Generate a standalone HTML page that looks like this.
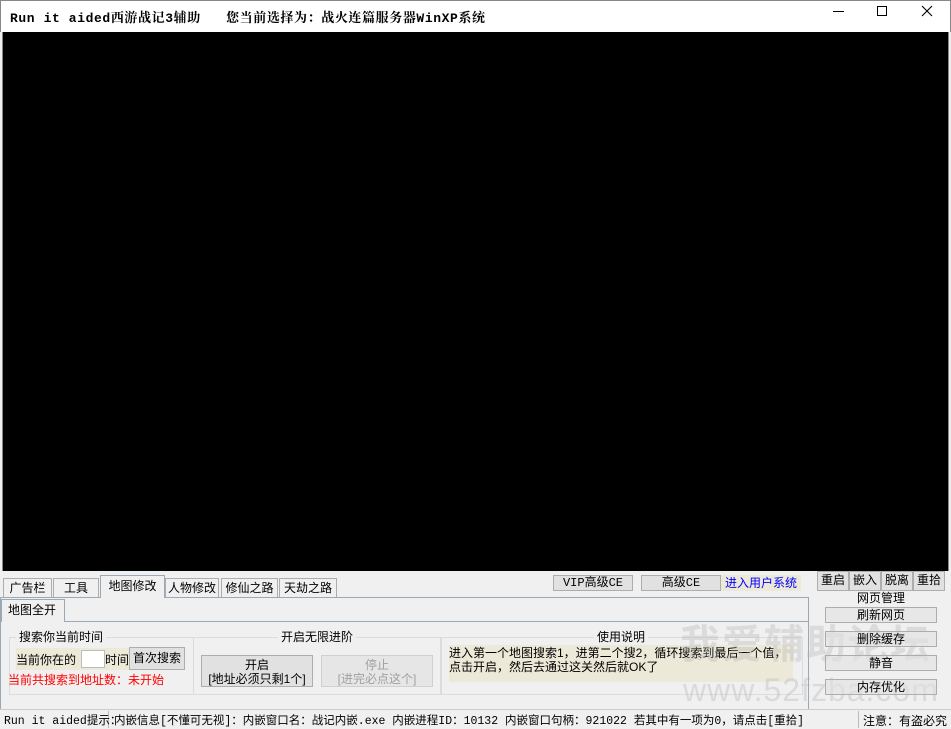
<!DOCTYPE html>
<html><head><meta charset="utf-8"><style>
*{margin:0;padding:0;box-sizing:border-box}
body{width:951px;height:729px;background:#f0f0f0;position:relative;overflow:hidden;font-family:"Liberation Sans","Noto Sans CJK SC",sans-serif;font-size:12px;color:#000}
.a{position:absolute;white-space:nowrap}
.btn{position:absolute;border:1px solid #adadad;background:#e1e1e1;text-align:center;line-height:14px}
.tab{position:absolute;border:1px solid #adadad;border-bottom:none;background:#f0f0f0;text-align:center;line-height:18px;top:578px;height:19px}
.grp{position:absolute;border:1px solid #dcdcdc;}
.gt{position:absolute;background:#f0f0f0;padding:0 3px;top:-9px;line-height:16px}
</style></head><body>
<div class="a" style="left:0;top:0;width:951px;height:32px;background:#fff;border:1px solid #888;border-bottom:none"></div>
<div class="a" style="left:10px;top:7px;font-family:'Liberation Mono','Noto Serif CJK SC',monospace;font-weight:bold;font-size:13px;letter-spacing:0.6px">Run it aided西游战记3辅助 &nbsp;&nbsp;您当前选择为：战火连篇服务器WinXP系统</div>
<div class="a" style="left:833px;top:11px;width:11px;height:1px;background:#000"></div>
<div class="a" style="left:877px;top:6px;width:10px;height:10px;border:1px solid #000"></div>
<svg class="a" style="left:921px;top:5px" width="12" height="12"><path d="M1 1L11 11M11 1L1 11" stroke="#000" stroke-width="1.1"/></svg>
<div class="a" style="left:2px;top:32px;width:947px;height:539px;background:#000;border-left:1px solid #888;border-right:1px solid #888"></div>

<div class="tab" style="left:3px;width:49px">广告栏</div>
<div class="tab" style="left:53px;width:46px">工具</div>
<div class="tab" style="left:165px;width:54px">人物修改</div>
<div class="tab" style="left:221px;width:57px">修仙之路</div>
<div class="tab" style="left:279px;width:58px">天劫之路</div>
<div class="a" style="left:0;top:597px;width:809px;height:112px;border:1px solid #9aa9b5;border-bottom:none;background:#f0f0f0"></div>
<div class="tab" style="left:100px;top:575px;width:65px;height:23px;line-height:20px;border-color:#9aa9b5;z-index:2">地图修改</div>
<div class="a" style="left:64px;top:621px;width:744px;height:1px;background:#9aa9b5"></div>
<div class="a" style="left:1px;top:599px;width:64px;height:23px;border:1px solid #9aa9b5;border-bottom:none;line-height:20px;padding-left:6px">地图全开</div>

<div class="grp" style="left:9px;top:637px;width:185px;height:58px"><span class="gt" style="left:6px">搜索你当前时间</span></div>
<div class="a" style="left:16px;top:648px;width:113px;height:22px;background:#ece9d8"></div>
<div class="a" style="left:16px;top:651px">当前你在的</div>
<div class="a" style="left:81px;top:650px;width:24px;height:18px;background:#fff;border:1px solid #bbb"></div>
<div class="a" style="left:105px;top:651px">时间</div>
<div class="btn" style="left:129px;top:647px;width:56px;height:23px;line-height:21px">首次搜索</div>
<div class="a" style="left:8px;top:671px;color:#f00">当前共搜索到地址数：未开始</div>

<div class="grp" style="left:193px;top:637px;width:248px;height:58px"><span class="gt" style="left:84px">开启无限进阶</span></div>
<div class="btn" style="left:201px;top:655px;width:112px;height:32px;padding-top:2px">开启<br>[地址必须只剩1个]</div>
<div class="btn" style="left:321px;top:655px;width:112px;height:32px;padding-top:2px;color:#a0a0a0;background:#e6e6e6;border-color:#d0d0d0">停止<br>[进完必点这个]</div>

<div class="grp" style="left:441px;top:637px;width:362px;height:58px"><span class="gt" style="left:152px">使用说明</span></div>
<div class="a" style="left:449px;top:645px;width:344px;height:37px;background:#ece9d8"></div>
<div class="a" style="left:449px;top:646px;line-height:14px">进入第一个地图搜索1，进第二个搜2，循环搜索到最后一个值，<br>点击开启，然后去通过这关然后就OK了</div>

<div class="a" style="left:680px;top:612px;font-size:40px;font-weight:bold;color:rgba(180,180,180,0.35);letter-spacing:2px;font-family:'Noto Sans CJK SC',sans-serif">我爱辅助论坛</div>
<div class="a" style="left:683px;top:672px;font-size:32px;color:rgba(170,170,170,0.3);letter-spacing:1px">www.52fzba.com</div>

<div class="btn" style="left:553px;top:575px;width:80px;height:16px;font-family:'Liberation Mono','Noto Sans CJK SC',monospace">VIP高级CE</div>
<div class="btn" style="left:641px;top:575px;width:80px;height:16px;font-family:'Liberation Mono','Noto Sans CJK SC',monospace">高级CE</div>
<div class="a" style="left:721px;top:575px;width:80px;height:16px;background:#ece9d8;color:#00f;text-align:center;line-height:16px">进入用户系统</div>
<div class="btn" style="left:817px;top:571px;width:32px;height:20px;line-height:17px">重启</div>
<div class="btn" style="left:849px;top:571px;width:32px;height:20px;line-height:17px">嵌入</div>
<div class="btn" style="left:881px;top:571px;width:32px;height:20px;line-height:17px">脱离</div>
<div class="btn" style="left:913px;top:571px;width:32px;height:20px;line-height:17px">重拾</div>
<div class="a" style="left:857px;top:589px">网页管理</div>
<div class="btn" style="left:825px;top:607px;width:112px;height:16px;background:rgba(225,225,225,0.6)">刷新网页</div>
<div class="btn" style="left:825px;top:631px;width:112px;height:16px;background:rgba(225,225,225,0.6)">删除缓存</div>
<div class="btn" style="left:825px;top:655px;width:112px;height:16px;background:rgba(225,225,225,0.6)">静音</div>
<div class="btn" style="left:825px;top:679px;width:112px;height:16px;background:rgba(225,225,225,0.6)">内存优化</div>

<div class="a" style="left:0;top:709px;width:951px;height:20px;border-top:1px solid #ccc"></div>
<div class="a" style="left:108px;top:711px;width:1px;height:17px;background:#bbb"></div>
<div class="a" style="left:858px;top:711px;width:1px;height:17px;background:#bbb"></div>
<div class="a" style="left:4px;top:712px;font-family:'Liberation Mono','Noto Sans CJK SC',monospace;font-size:11.5px">Run it aided提示：</div>
<div class="a" style="left:114px;top:712px;font-family:'Liberation Mono','Noto Sans CJK SC',monospace;font-size:11.5px">内嵌信息[不懂可无视]：内嵌窗口名：战记内嵌.exe 内嵌进程ID：10132 内嵌窗口句柄：921022 若其中有一项为0，请点击[重拾]</div>
<div class="a" style="left:863px;top:712px">注意：有盗必究</div>
</body></html>
